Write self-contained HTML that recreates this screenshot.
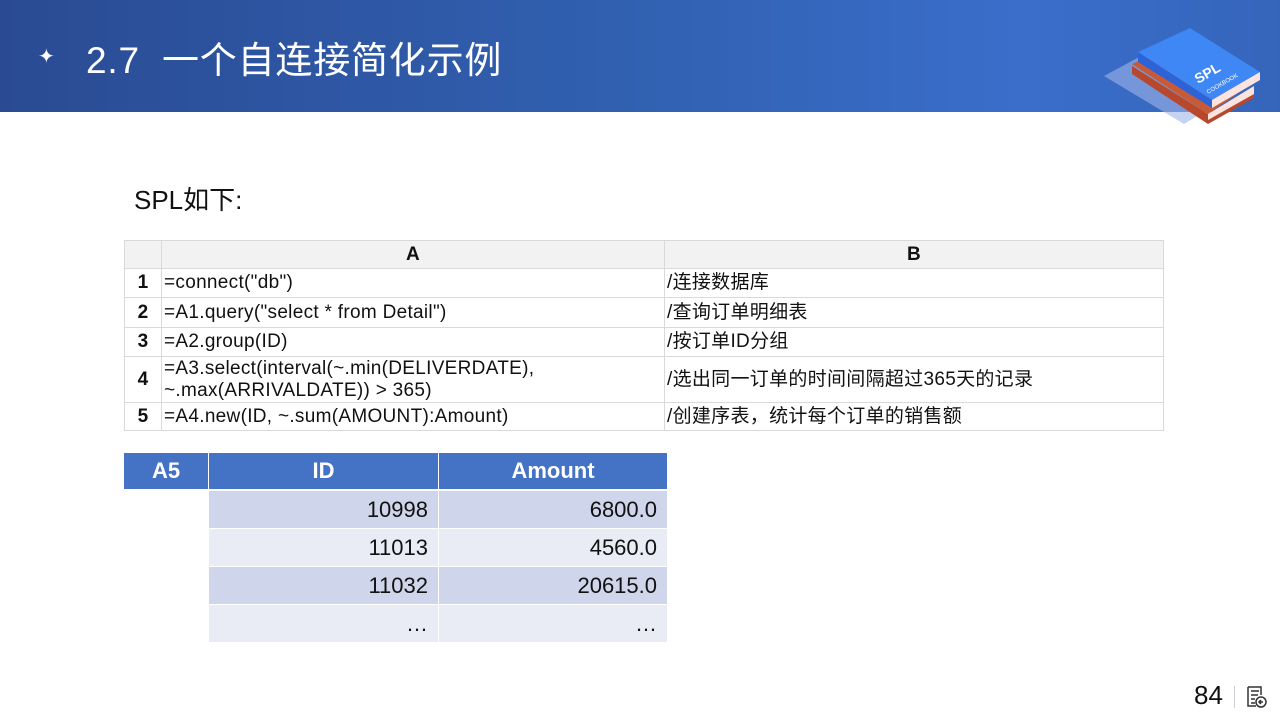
<!DOCTYPE html>
<html><head><meta charset="utf-8"><style>
body{margin:0;width:1280px;height:720px;position:relative;overflow:hidden;background:#fff;font-family:"Liberation Sans","Noto Sans CJK SC",sans-serif;}
.hdr{position:absolute;left:0;top:0;width:1280px;height:112px;background:linear-gradient(90deg,#2a4b93 0%,#3263b5 55%,#3a6ecb 80%,#3565bb 100%);}
.title{position:absolute;left:86px;top:30px;color:#fff;font-size:37px;letter-spacing:0.8px;}
.star{position:absolute;left:38px;top:44px;color:#fff;font-size:20px;}
.sub{position:absolute;left:134px;top:180px;font-size:26px;color:#111;}
.c{position:absolute;box-sizing:border-box;border:1px solid #d9d9d9;font-size:19px;letter-spacing:0.3px;color:#111;display:flex;align-items:center;padding-left:2px;line-height:22px;}
.h{background:#f2f2f2;font-weight:bold;justify-content:center;padding:0;}
.n{font-weight:bold;justify-content:center;padding:0;}
.r{position:absolute;box-sizing:border-box;font-size:22px;color:#111;display:flex;align-items:center;justify-content:flex-end;padding-right:10px;border-right:2px solid #fff;border-bottom:2px solid #fff;}
.rh{background:#4472c4;color:#fff;font-weight:bold;justify-content:center;padding:0;}
</style></head><body>
<div class="hdr"></div>
<div class="star">✦</div>
<div class="title">2.7&nbsp; 一个自连接简化示例</div>
<svg style="position:absolute;left:1098px;top:14px" width="165" height="115" viewBox="0 0 165 115">
<polygon points="6,62 56,35 136,80 86,110" fill="#9fb4e8" opacity="0.6"/>
<polygon points="34,50 97,23 156,68 110,100" fill="#c85a38"/>
<polygon points="34,60 110,110 156,84 156,72 110,100 34,52" fill="#b7482c"/>
<polygon points="110,100 156,72 156,80 110,106" fill="#fbe3e0"/>
<polygon points="40,38 92,14 162,58 114,86" fill="#3e87f5"/>
<polygon points="40,38 114,86 114,94 40,48" fill="#2d63d6"/>
<polygon points="114,86 162,58 162,66 114,94" fill="#fbe3e0"/>
<text x="100" y="70" fill="#fff" font-size="14" font-weight="bold" transform="rotate(-30 100 70)" font-family="Liberation Sans">SPL</text>
<text x="110" y="80" fill="#fff" font-size="6" transform="rotate(-30 110 80)" font-family="Liberation Sans">COOKBOOK</text>
</svg>
<div class="sub">SPL如下:</div>

<div class="c h" style="left:124px;top:240px;width:38px;height:29px"></div>
<div class="c h" style="left:161px;top:240px;width:504px;height:29px">A</div>
<div class="c h" style="left:664px;top:240px;width:500px;height:29px">B</div>

<div class="c n" style="left:124px;top:268px;width:38px;height:30px">1</div>
<div class="c" style="left:161px;top:268px;width:504px;height:30px">=connect("db")</div>
<div class="c" style="left:664px;top:268px;width:500px;height:30px">/连接数据库</div>

<div class="c n" style="left:124px;top:297px;width:38px;height:31px">2</div>
<div class="c" style="left:161px;top:297px;width:504px;height:31px">=A1.query("select * from Detail")</div>
<div class="c" style="left:664px;top:297px;width:500px;height:31px">/查询订单明细表</div>

<div class="c n" style="left:124px;top:327px;width:38px;height:30px">3</div>
<div class="c" style="left:161px;top:327px;width:504px;height:30px">=A2.group(ID)</div>
<div class="c" style="left:664px;top:327px;width:500px;height:30px">/按订单ID分组</div>

<div class="c n" style="left:124px;top:356px;width:38px;height:47px">4</div>
<div class="c" style="left:161px;top:356px;width:504px;height:47px">=A3.select(interval(~.min(DELIVERDATE),<br>~.max(ARRIVALDATE)) &gt; 365)</div>
<div class="c" style="left:664px;top:356px;width:500px;height:47px">/选出同一订单的时间间隔超过365天的记录</div>

<div class="c n" style="left:124px;top:402px;width:38px;height:29px">5</div>
<div class="c" style="left:161px;top:402px;width:504px;height:29px">=A4.new(ID, ~.sum(AMOUNT):Amount)</div>
<div class="c" style="left:664px;top:402px;width:500px;height:29px">/创建序表，统计每个订单的销售额</div>

<div class="r rh" style="left:124px;top:453px;width:86px;height:38px">A5</div>
<div class="r rh" style="left:209px;top:453px;width:231px;height:38px">ID</div>
<div class="r rh" style="left:439px;top:453px;width:230px;height:38px">Amount</div>

<div class="r" style="left:209px;top:491px;width:231px;height:39px;background:#cfd5ea">10998</div>
<div class="r" style="left:439px;top:491px;width:230px;height:39px;background:#cfd5ea">6800.0</div>
<div class="r" style="left:209px;top:529px;width:231px;height:39px;background:#e9ebf5">11013</div>
<div class="r" style="left:439px;top:529px;width:230px;height:39px;background:#e9ebf5">4560.0</div>
<div class="r" style="left:209px;top:567px;width:231px;height:39px;background:#cfd5ea">11032</div>
<div class="r" style="left:439px;top:567px;width:230px;height:39px;background:#cfd5ea">20615.0</div>
<div class="r" style="left:209px;top:605px;width:231px;height:39px;background:#e9ebf5">…</div>
<div class="r" style="left:439px;top:605px;width:230px;height:39px;background:#e9ebf5">…</div>

<div style="position:absolute;left:1194px;top:680px;font-size:26px;color:#111">84</div>
<div style="position:absolute;left:1234px;top:686px;width:1px;height:22px;background:#ccd"></div>
<svg style="position:absolute;left:1245px;top:685px" width="24" height="24" viewBox="0 0 24 24" fill="none" stroke="#333" stroke-width="1.5">
<path d="M3 2h13v8M3 2v19h8M6 6h8M6 10h7M6 14h4M6 18h4"/><circle cx="16" cy="17" r="5"/><path d="M18 17h-4M16 15l-2 2 2 2"/></svg>
</body></html>
